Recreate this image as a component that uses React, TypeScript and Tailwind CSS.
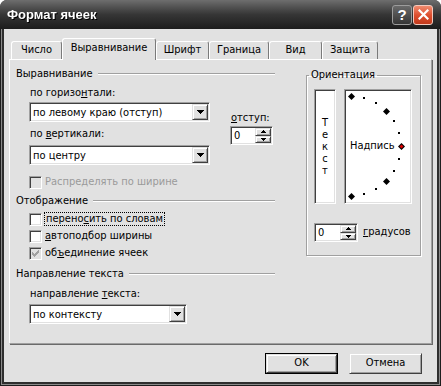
import React from 'react';

const sunken =
  "border border-t-[#a0a0a0] border-l-[#a0a0a0] border-r-white border-b-white shadow-[inset_1px_1px_0_#404040,inset_-1px_-1px_0_#e1e1e1]";
const raised =
  "border border-t-[#e1e1e1] border-l-[#e1e1e1] border-r-[#404040] border-b-[#404040] shadow-[inset_1px_1px_0_#fff,inset_-1px_-1px_0_#a0a0a0]";

function DownArrow() {
  return (
    <svg width="7" height="4" viewBox="0 0 7 4" shapeRendering="crispEdges">
      <path d="M0 0h7v1h-1v1h-1v1h-1v1h-1v-1h-1v-1h-1v-1h-1z" fill="#000" />
    </svg>
  );
}

function SmallArrow({ up }: { up?: boolean }) {
  return (
    <svg width="5" height="3" viewBox="0 0 5 3" shapeRendering="crispEdges">
      {up ? (
        <path d="M2 0h1v1h1v1h1v1h-5v-1h1v-1h1z" fill="#000" />
      ) : (
        <path d="M0 0h5v1h-1v1h-1v1h-1v-1h-1v-1h-1z" fill="#000" />
      )}
    </svg>
  );
}

function Combo({ value, width }: { value: string; width: string }) {
  return (
    <div className={`${width} h-[20px] bg-white flex items-center p-px ${sunken}`}>
      <span className="flex-1 pl-[2px] leading-none">{value}</span>
      <div className={`w-[16px] h-[16px] bg-[#e1e1e1] flex items-center justify-center ${raised}`}>
        <DownArrow />
      </div>
    </div>
  );
}

function Spin({ width }: { width: string }) {
  return (
    <div className={`${width} h-[19px] bg-white flex p-px ${sunken}`}>
      <span className="flex-1 pl-[2px] leading-[15px]">0</span>
      <div className="w-[16px] flex flex-col">
        <div className={`flex-1 bg-[#e1e1e1] flex items-center justify-center ${raised}`}>
          <SmallArrow up />
        </div>
        <div className={`flex-1 bg-[#e1e1e1] flex items-center justify-center ${raised}`}>
          <SmallArrow />
        </div>
      </div>
    </div>
  );
}

function Checkbox({ checked, disabled }: { checked?: boolean; disabled?: boolean }) {
  return (
    <span
      className={`w-[13px] h-[13px] shrink-0 flex items-center justify-center ${sunken} ${
        disabled ? 'bg-[#e1e1e1]' : 'bg-white'
      }`}
    >
      {checked && (
        <svg width="7" height="7" viewBox="0 0 7 7" shapeRendering="crispEdges">
          <path
            d="M6 0h1v3h-1v1h-1v1h-1v1h-1v1h-1v-1h-1v-1h-1v-3h1v1h1v1h1v-1h1v-1h1z"
            fill="#a0a0a0"
          />
        </svg>
      )}
    </span>
  );
}

function Section({ title }: { title: string }) {
  return (
    <div className="flex items-center h-[14px]">
      <span>{title}</span>
      <span className="flex-1 ml-[5px] h-[2px] border-t border-t-[#a0a0a0] border-b border-b-white" />
    </div>
  );
}

const tabs = [
  { name: 'Число', w: 'w-[51px]' },
  { name: 'Выравнивание', w: 'w-[94px]', active: true },
  { name: 'Шрифт', w: 'w-[53px]' },
  { name: 'Граница', w: 'w-[60px]' },
  { name: 'Вид', w: 'w-[53px]' },
  { name: 'Защита', w: 'w-[56px]' },
];

function Dial() {
  const cx = 6;
  const cy = 56;
  const r = 50;
  const big = [90, 45, -45, -90];
  const small = [75, 60, 30, 15, -15, -30, -60, -75];
  const pt = (a: number) => {
    const rad = (a * Math.PI) / 180;
    return [Math.round(cx + r * Math.cos(rad)), Math.round(cy - r * Math.sin(rad))];
  };
  const diamond = (x: number, y: number, s: number) =>
    `${x},${y - s} ${x + s},${y} ${x},${y + s} ${x - s},${y}`;
  return (
    <svg className="absolute left-0 top-0" width="66" height="113" viewBox="0 0 66 113">
      {small.map((a) => {
        const [x, y] = pt(a);
        return <rect key={a} x={x - 1} y={y - 1} width="2" height="2" fill="#000" />;
      })}
      {big.map((a) => {
        const [x, y] = pt(a);
        return <polygon key={a} points={diamond(x + 0.5, y + 0.5, 3.5)} fill="#000" />;
      })}
      <polygon points={diamond(56.5, 56.5, 3.5)} fill="#000" />
      <polygon points={diamond(56.5, 56.5, 2)} fill="#e00000" />
    </svg>
  );
}

export default function App() {
  return (
    <div className="w-[441px] h-[386px] rounded-t-[7px] overflow-hidden flex flex-col bg-[#262626] text-[11px] text-black font-['DejaVu_Sans_Condensed','Liberation_Sans',sans-serif]">
      {/* title bar */}
      <div className="h-[29px] shrink-0 flex items-center justify-between pl-[7px] pr-[8px] bg-linear-to-b from-[#6e6e6e] via-[#363636] to-[#1c1c1c]">
        <span className="text-white font-bold text-[13px] font-['Liberation_Sans',sans-serif] drop-shadow-[1px_1px_0_#000]">
          Формат ячеек
        </span>
        <div className="flex gap-[1px]">
          <div className="w-[20px] h-[20px] rounded-[3px] border border-[#9c9c9c] bg-linear-to-b from-[#6a6a6a] to-[#363636] flex items-center justify-center text-white font-bold text-[15px] leading-none font-['Liberation_Sans',sans-serif]">
            ?
          </div>
          <div className="w-[20px] h-[20px] rounded-[3px] border border-[#f3c9bd] bg-linear-to-b from-[#f08a6e] via-[#de4f2f] to-[#c23a1c] flex items-center justify-center">
            <svg width="11" height="11" viewBox="0 0 11 11">
              <path d="M1.5 1.5l8 8M9.5 1.5l-8 8" stroke="#fff" strokeWidth="2.2" strokeLinecap="square" />
            </svg>
          </div>
        </div>
      </div>

      {/* frame */}
      <div className="flex-1 flex flex-col px-px pb-px bg-[#1e1e1e]">
        <div className="flex-1 flex flex-col px-px pb-px bg-[#8a8a8a]">
          <div className="flex-1 flex flex-col px-[2px] pb-[2px] bg-[#2e2e2e]">
            <div className="flex-1 flex flex-col bg-[#e1e1e1] px-[5px] pt-[8px]">
              {/* tabs */}
              <div className="flex items-end h-[22px] pl-[2px]">
                {tabs.map((t) => (
                  <div
                    key={t.name}
                    className={`${t.w} flex items-center justify-center rounded-t-[3px] border-l border-t border-l-white border-t-white border-r border-r-[#7a7a7a] bg-[#e1e1e1] ${
                      t.active ? 'h-[22px] relative z-10 -mb-px pb-[2px]' : 'h-[18px]'
                    }`}
                  >
                    {t.name}
                  </div>
                ))}
              </div>

              {/* panel */}
              <div className="h-[285px] flex border border-t-white border-l-white border-r-[#a0a0a0] border-b-[#a0a0a0] shadow-[1px_1px_0_#6a6a6a] pl-[6px] pt-[7px]">
                {/* left column */}
                <div className="w-[259px] flex flex-col">
                  <Section title="Выравнивание" />
                  <div className="flex pl-[13px]">
                    <div className="flex flex-col">
                      <div className="mt-[5px] h-[14px] pl-px leading-[14px]">
                        по горизо<u>н</u>тали:
                      </div>
                      <div className="mt-[2px]">
                        <Combo value="по левому краю (отступ)" width="w-[181px]" />
                      </div>
                      <div className="mt-[5px] h-[14px] pl-px leading-[14px]">
                        по <u>в</u>ертикали:
                      </div>
                      <div className="mt-[4px]">
                        <Combo value="по центру" width="w-[181px]" />
                      </div>
                    </div>
                    <div className="flex flex-col ml-[20px]">
                      <div className="mt-[30px] h-[14px] pl-px leading-[14px]">
                        <u>о</u>тступ:
                      </div>
                      <div className="mt-[1px]">
                        <Spin width="w-[43px]" />
                      </div>
                    </div>
                  </div>
                  <div className="mt-[10px] h-[14px] flex items-center pl-[13px] gap-[3px] text-[#9a9a9a]">
                    <Checkbox disabled />
                    <span>Распределять по ширине</span>
                  </div>

                  <div className="mt-[5px]">
                    <Section title="Отображение" />
                  </div>
                  <div className="mt-[4px] h-[14px] flex items-center pl-[13px] gap-[2px]">
                    <Checkbox />
                    <span className="border border-dotted border-black px-px leading-[12px]">
                      перено<u>с</u>ить по словам
                    </span>
                  </div>
                  <div className="mt-[3px] h-[14px] flex items-center pl-[13px] gap-[3px]">
                    <Checkbox />
                    <span>
                      <u>а</u>втоподбор ширины
                    </span>
                  </div>
                  <div className="mt-[3px] h-[14px] flex items-center pl-[13px] gap-[3px]">
                    <Checkbox checked disabled />
                    <span>
                      об<u>ъ</u>единение ячеек
                    </span>
                  </div>

                  <div className="mt-[7px]">
                    <Section title="Направление текста" />
                  </div>
                  <div className="mt-[6px] h-[14px] pl-[14px] leading-[14px]">
                    направление <u>т</u>екста:
                  </div>
                  <div className="mt-[3px] pl-[13px]">
                    <Combo value="по контексту" width="w-[158px]" />
                  </div>
                </div>

                {/* orientation */}
                <fieldset className="ml-[31px] mt-px w-[115px] h-[188px] border border-[#a0a0a0] shadow-[inset_1px_1px_0_#fff,1px_1px_0_#fff] px-[7px]">
                  <legend className="ml-[-5px] px-[2px] leading-[14px]">Ориентация</legend>
                  <div className="flex gap-[8px] mt-[7px]">
                    <div className={`w-[22px] h-[115px] bg-white flex flex-col items-center justify-center ${sunken}`}>
                      {['Т', 'е', 'к', 'с', 'т'].map((c, i) => (
                        <span key={i} className="leading-[12px]">
                          {c}
                        </span>
                      ))}
                    </div>
                    <div className={`relative w-[68px] h-[115px] bg-white flex items-center pl-[5px] ${sunken}`}>
                      <Dial />
                      <span className="relative">Надпись</span>
                    </div>
                  </div>
                  <div className="flex items-center mt-[19px]">
                    <Spin width="w-[44px]" />
                    <span className="ml-[5px]">
                      <u>г</u>радусов
                    </span>
                  </div>
                </fieldset>
              </div>

              {/* buttons */}
              <div className="flex justify-end gap-[11px] mt-[9px] pr-[10px]">
                <div className="w-[73px] h-[21px] border border-black">
                  <div className={`w-full h-full flex items-center justify-center bg-[#e1e1e1] ${raised}`}>OK</div>
                </div>
                <div className={`w-[73px] h-[21px] flex items-center justify-center bg-[#e1e1e1] ${raised}`}>
                  Отмена
                </div>
              </div>
            </div>
          </div>
        </div>
      </div>
    </div>
  );
}
